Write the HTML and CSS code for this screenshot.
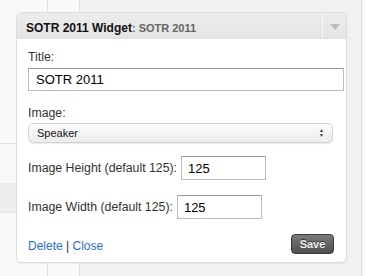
FILE: index.html
```html
<!DOCTYPE html>
<html lang="en">
<head>
    <meta charset="UTF-8">
    <title>SOTR 2011 Widget</title>
    <link rel="stylesheet" href="styles.css">
</head>
<body>
    <div class="backdrop">
        <div class="side">
            <div class="side_top"></div>
            <div class="side_band"></div>
        </div>
        <div class="strip"></div>
        <div class="main"></div>
        <div class="edge"></div>
    </div>

    <div class="widget">
        <div class="widget_top">
            <div class="widget_title">SOTR 2011 Widget<span class="in_title">: SOTR 2011</span></div>
            <div class="widget_toggle"><span class="arrow"></span></div>
        </div>
        <div class="widget_body">
            <label class="field">
                <span class="label">Title:</span>
                <input type="text" class="wide" value="SOTR 2011">
            </label>
            <label class="field pick">
                <span class="label">Image:</span>
                <div class="select">
                    <span>Speaker</span>
                    <span class="updown">&#9650;<br>&#9660;</span>
                </div>
            </label>
            <label class="field row">
                <span>Image Height (default 125):</span>
                <input type="text" class="small" value="125">
            </label>
            <label class="field row">
                <span>Image Width (default 125):</span>
                <input type="text" class="small" value="125">
            </label>
            <div class="controls">
                <div class="links"><a href="#">Delete</a> | <a href="#">Close</a></div>
                <button class="save">Save</button>
            </div>
        </div>
    </div>
</body>
</html>
```
FILE: styles.css
```css
body{
    margin:0;
    width:365px;
    height:276px;
    overflow:hidden;
    position:relative;
    font-family:"Liberation Sans", Arial, sans-serif;
    background:#f5f5f5;
}

.backdrop{
    display:flex;
    height:276px;
}

.side{
    width:47px;
    display:flex;
    flex-direction:column;
    background:#f9f9f9;
}

.side_top{
    height:143px;
    border-bottom:1px solid #dfdfdf;
}

.side_band{
    margin-top:39px;
    height:29px;
    background:#eeeeee;
    border-bottom:1px solid #e3e8dc;
}

.strip{
    width:31px;
    border-left:1px solid #dfdfdf;
    border-right:1px solid #dfdfdf;
    background:#f9f9f9;
}

.main{
    flex:1;
    background:#f1f1f1;
}

.edge{
    width:3px;
    border-left:1px solid #e2e2e2;
    background:#f7f7f7;
}

/* widget floats over the admin page */
.widget{
    position:absolute;
    left:16px;
    top:12px;
    width:329px;
    height:249px;
    background:#fff;
    border:1px solid #dcdcdc;
    border-radius:6px;
    box-shadow:0 1px 2px rgba(0,0,0,0.06);
    overflow:hidden;
}

.widget_top{
    display:flex;
    height:25px;
    background:linear-gradient(#ececec, #e4e4e4);
    border-bottom:1px solid #dfdfdf;
}

.widget_title{
    flex:1;
    padding:8px 0 0 9px;
    font-size:12px;
    font-weight:bold;
    color:#111;
}

.in_title{
    font-size:11px;
    color:#666;
}

.widget_toggle{
    width:23px;
    border-left:1px solid #f8f8f8;
    display:flex;
    justify-content:center;
    align-items:center;
}

.arrow{
    width:0;
    height:0;
    border-left:5px solid transparent;
    border-right:5px solid transparent;
    border-top:6px solid #bbb;
    margin-top:2px;
}

.widget_body{
    padding:11px 0 0 11px;
    font-size:12.3px;
    line-height:15px;
    color:#333;
}

.field{
    display:block;
    margin-bottom:15px;
}

.field.pick{
    margin-bottom:13px;
}

.label{
    display:block;
    margin-bottom:3px;
}

.wide{
    box-sizing:border-box;
    display:block;
    width:316px;
    height:23px;
    font:13px "Liberation Sans", Arial, sans-serif;
    color:#000;
    padding:0 7px;
    border:1px solid #bbb;
    border-top-color:#999;
    border-radius:0;
    outline:none;
}

.pick .label{
    margin-bottom:2px;
}

.select{
    box-sizing:border-box;
    width:305px;
    height:20px;
    display:flex;
    justify-content:space-between;
    align-items:center;
    padding:0 8px;
    font-size:11px;
    color:#111;
    border:1px solid #d4d4d4;
    border-radius:5px;
    background:linear-gradient(#fdfdfd, #ececec);
    box-shadow:0 1px 1px rgba(0,0,0,0.08);
}

.updown{
    font-size:5px;
    line-height:5px;
    color:#333;
    text-align:center;
}

.row{
    display:flex;
    align-items:center;
    gap:4px;
}

.small{
    box-sizing:border-box;
    width:85px;
    height:24px;
    font:13px "Liberation Sans", Arial, sans-serif;
    color:#000;
    padding:0 6px;
    border:1px solid #bbb;
    border-top-color:#999;
    outline:none;
}

.controls{
    display:flex;
    justify-content:space-between;
    align-items:center;
    padding-right:12px;
    margin-top:0;
}

.links{
    font-size:12px;
    padding-top:4px;
    color:#333;
}

.links a{
    color:#2a6bcc;
    text-decoration:none;
}

.save{
    width:43px;
    height:20px;
    border:1px solid #3a3a3a;
    border-radius:4px;
    background:linear-gradient(#7a7a7a, #4e4e4e);
    color:#eee;
    font:bold 11px "Liberation Sans", Arial, sans-serif;
    text-shadow:0 -1px 0 #333;
    padding:0;
}
```
